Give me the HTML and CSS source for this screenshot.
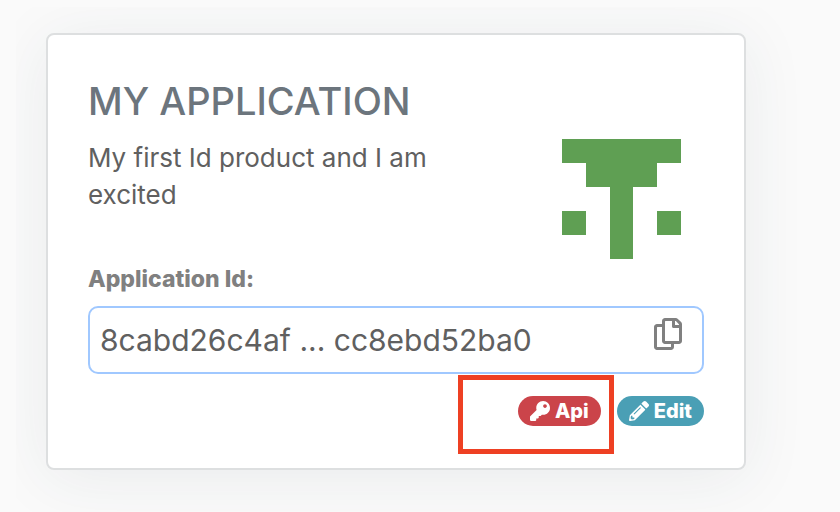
FILE: index.html
```html
<!DOCTYPE html>
<html lang="en">
<head>
<meta charset="utf-8">
<meta name="viewport" content="width=device-width, initial-scale=1">
<title>My Application</title>
<link rel="stylesheet" href="styles.css">
</head>
<body>
<main class="page">
  <article class="card">
    <h1 class="title">MY APPLICATION</h1>
    <div class="summary">
      <p class="description">My first Id product and I am excited</p>
      <svg class="identicon" viewBox="0 0 119 120" shape-rendering="crispEdges" aria-hidden="true">
        <path d="M0 0h119v24H95v24H71v72H48V48H24V24H0zM0 72h24v24H0zM95 72h24v24H95z"/>
      </svg>
    </div>
    <label class="label" for="app-id">Application Id:</label>
    <div class="field">
      <input class="input" id="app-id" type="text" value="8cabd26c4af ... cc8ebd52ba0" readonly>
      <button class="copy" type="button" aria-label="Copy">
        <svg class="copy-icon" viewBox="0 0 448 512" aria-hidden="true"><path d="M433.941 65.941l-51.882-51.882A48 48 0 0 0 348.118 0H176c-26.51 0-48 21.49-48 48v48H48c-26.51 0-48 21.49-48 48v320c0 26.51 21.49 48 48 48h224c26.51 0 48-21.49 48-48v-48h80c26.51 0 48-21.49 48-48V99.882a48 48 0 0 0-14.059-33.941zM266 464H54a6 6 0 0 1-6-6V150a6 6 0 0 1 6-6h74v224c0 26.51 21.49 48 48 48h96v42a6 6 0 0 1-6 6zm128-96H182a6 6 0 0 1-6-6V54a6 6 0 0 1 6-6h106v88c0 13.255 10.745 24 24 24h88v202a6 6 0 0 1-6 6zm6-256h-64V48h9.632c1.591 0 3.117.632 4.243 1.757l48.368 48.368a6 6 0 0 1 1.757 4.243V112z"/></svg>
      </button>
    </div>
    <div class="actions">
      <div class="marked">
        <a class="pill pill-api" href="#api">
          <svg class="pill-icon" viewBox="0 0 512 512" aria-hidden="true"><path d="M512 176.001C512 273.203 433.202 352 336 352c-11.22 0-22.19-1.062-32.827-3.069l-24.012 27.014A23.999 23.999 0 0 1 261.223 384H224v40c0 13.255-10.745 24-24 24h-40v40c0 13.255-10.745 24-24 24H24c-13.255 0-24-10.745-24-24v-78.059c0-6.365 2.529-12.47 7.029-16.971l161.802-161.802C163.108 213.814 160 195.271 160 176 160 78.798 238.797.001 335.999 0 433.488-.001 512 78.511 512 176.001zM336 128c0 26.51 21.49 48 48 48s48-21.49 48-48-21.49-48-48-48-48 21.49-48 48z"/></svg>
          Api
        </a>
      </div>
      <a class="pill pill-edit" href="#edit">
        <svg class="pill-icon" viewBox="0 0 512 512" aria-hidden="true"><path d="M497.9 142.1l-46.1 46.1c-4.7 4.7-12.3 4.7-17 0l-111-111c-4.7-4.7-4.7-12.3 0-17l46.1-46.1c18.7-18.7 49.1-18.7 67.9 0l60.1 60.1c18.8 18.7 18.8 49.1 0 67.9zM284.2 99.8L21.6 362.4.4 483.9c-2.9 16.4 11.4 30.6 27.8 27.8l121.5-21.3 262.6-262.6c4.7-4.7 4.7-12.3 0-17l-111-111c-4.8-4.7-12.4-4.7-17.1 0zM124.1 339.9c-5.5-5.5-5.5-14.3 0-19.8l154-154c5.5-5.5 14.3-5.5 19.8 0s5.5 14.3 0 19.8l-154 154c-5.5 5.5-14.3 5.5-19.8 0zM88 424h48v36.3l-64.5 11.3-31.1-31.1L51.7 376H88v48z"/></svg>
        Edit
      </a>
    </div>
  </article>
</main>
</body>
</html>
```
FILE: styles.css
```css
* {
  box-sizing: border-box;
}

body {
  margin: 0;
  background: #fafafa;
  color: #606060;
  font-family: Inter, "Liberation Sans", sans-serif;
}

/* Clips the card's wide shadow at the section edge. */
.page {
  margin: 7px 0 0 16px;
  padding: 26px 94px 42px 30px;
  overflow: hidden;
}

.card {
  padding: 40px 40px 42px;
  border: 2px solid #dddfe0;
  border-radius: 8px;
  background: #fff;
  box-shadow: 0 8px 64px rgba(40, 60, 80, 0.08);
}

.title {
  margin: 0;
  color: #6c757d;
  font-size: 38px;
  font-weight: 500;
  line-height: 52px;
}

.summary {
  display: flex;
  justify-content: space-between;
  gap: 24px;
  padding: 12px 23px 0 0;
}

.description {
  max-width: 380px;
  margin: 0;
  font-size: 26px;
  line-height: 37px;
}

.identicon {
  flex: none;
  width: 119px;
  height: 120px;
  fill: #5f9f53;
}

.label {
  display: block;
  color: #808080;
  font-size: 23px;
  font-weight: 800;
  line-height: 40px;
}

.field {
  display: flex;
  align-items: flex-start;
  height: 68px;
  margin-top: 7px;
  padding: 10px;
  border: 2px solid #a0c8ff;
  border-radius: 10px;
}

.input {
  flex: 1;
  min-width: 0;
  height: 44px;
  padding: 0;
  border: 0;
  outline: 0;
  background: transparent;
  color: #606060;
  font: inherit;
  font-size: 30px;
}

.copy {
  padding: 0 10px;
  border: 0;
  background: transparent;
}

.copy-icon {
  display: block;
  width: 28px;
  height: 32px;
  fill: #808080;
}

.actions {
  display: flex;
  justify-content: flex-end;
  gap: 16px;
  margin-top: 22px;
}

.marked {
  position: relative;
}

/* Callout frame drawn around the Api link. */
.marked::after {
  content: "";
  position: absolute;
  inset: -21px -13px -28px -60px;
  border: 5px solid #ee4023;
  pointer-events: none;
}

.pill {
  display: flex;
  align-items: center;
  gap: 5px;
  height: 30px;
  padding: 0 12px;
  border-radius: 15px;
  color: #fff;
  font-size: 20px;
  font-weight: 800;
  text-decoration: none;
}

.pill-api {
  background: #cb444a;
}

.pill-edit {
  background: #4a9fb5;
}

.pill-icon {
  width: 20px;
  height: 20px;
  fill: #fff;
}
```
